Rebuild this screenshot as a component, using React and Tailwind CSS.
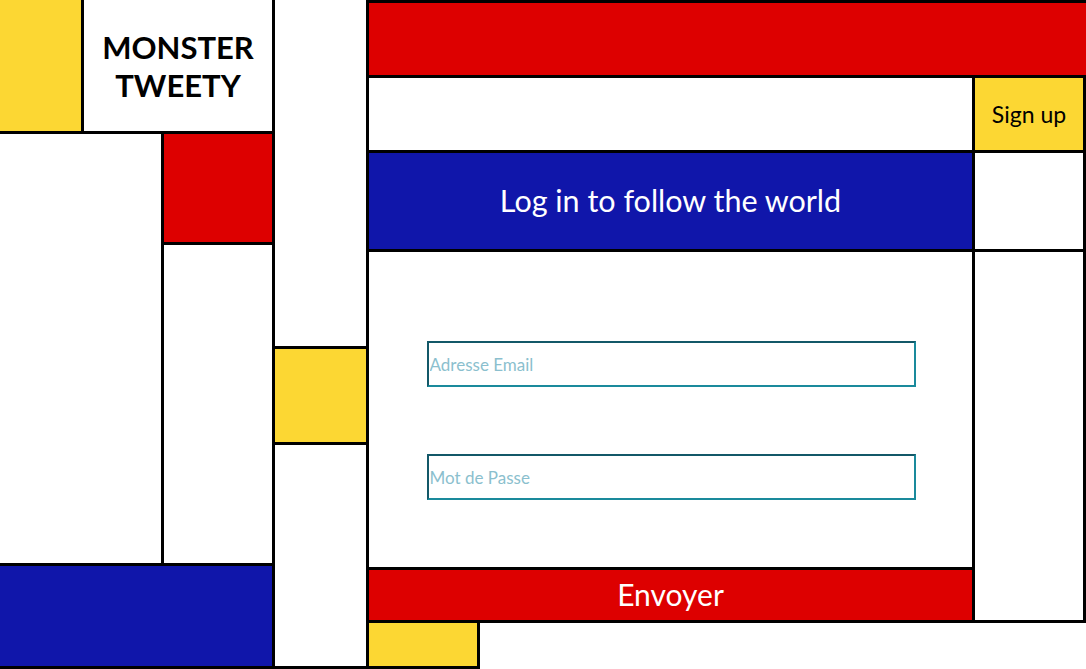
const font = { fontFamily: 'Lato, "Noto Sans", sans-serif' };

function LoginForm() {
  return (
    <form
      onSubmit={(e) => e.preventDefault()}
      className="flex flex-1 flex-col gap-[3px]"
    >
      <div className="flex flex-1 flex-col items-center gap-[67px] bg-white pl-px pt-[89px]">
        <input
          type="email"
          placeholder="Adresse Email"
          className="h-[46px] w-[489px] border-2 border-t-[#135868] border-l-[#135868] border-r-[#1a8a9c] border-b-[#1a8a9c] bg-white px-px text-[17px] text-[#2b5f6e] outline-none placeholder:text-[#8bbfce]"
        />
        <input
          type="password"
          placeholder="Mot de Passe"
          className="h-[46px] w-[489px] border-2 border-t-[#135868] border-l-[#135868] border-r-[#1a8a9c] border-b-[#1a8a9c] bg-white px-px text-[17px] text-[#2b5f6e] outline-none placeholder:text-[#8bbfce]"
        />
      </div>
      <button
        type="submit"
        className="flex h-[50px] items-center justify-center bg-[#dd0000] pb-[2px] text-[30px] leading-none text-white"
      >
        Envoyer
      </button>
    </form>
  );
}

export default function App() {
  return (
    <div style={font} className="flex h-[669px] w-[1086px] gap-[3px] overflow-hidden bg-black">
      {/* Left column */}
      <div className="flex w-[272px] flex-col gap-[3px] pb-[3px]">
        <div className="flex h-[131px] gap-[3px]">
          <div className="w-[81px] bg-[#fcd733]" />
          <div className="flex flex-1 items-center justify-center bg-white">
            <h1 className="text-center text-[31px] font-bold leading-[38px] text-black">
              MONSTER
              <br />
              TWEETY
            </h1>
          </div>
        </div>
        <div className="flex h-[429px] gap-[3px]">
          <div className="w-[161px] bg-white" />
          <div className="flex flex-1 flex-col gap-[3px]">
            <div className="h-[108px] bg-[#dd0000]" />
            <div className="flex-1 bg-white" />
          </div>
        </div>
        <div className="flex-1 bg-[#1016aa]" />
      </div>

      {/* Narrow column */}
      <div className="flex w-[91px] flex-col gap-[3px] pb-[3px]">
        <div className="h-[346px] bg-white" />
        <div className="h-[93px] bg-[#fcd733]" />
        <div className="flex-1 bg-white" />
      </div>

      {/* Main column */}
      <div className="flex flex-1 flex-col gap-[3px] pt-[3px]">
        <div className="h-[72px] bg-[#dd0000]" />
        <div className="flex h-[542px] gap-[3px] pr-[3px]">
          <div className="flex w-[603px] flex-col gap-[3px]">
            <div className="h-[72px] bg-white" />
            <div className="flex h-[96px] items-center justify-center bg-[#1016aa]">
              <h2 className="pb-[2px] text-[30.5px] leading-none text-white">Log in to follow the world</h2>
            </div>
            <LoginForm />
          </div>
          <div className="flex flex-1 flex-col gap-[3px]">
            <a href="#" className="flex h-[72px] items-center justify-center bg-[#fcd733] text-[23px] text-black">
              Sign up
            </a>
            <div className="h-[96px] bg-white" />
            <div className="flex-1 bg-white" />
          </div>
        </div>
        <div className="flex flex-1">
          <div className="w-[108px] pb-[3px]">
            <div className="h-full bg-[#fcd733]" />
          </div>
          <div className="ml-[3px] flex-1 bg-white" />
        </div>
      </div>
    </div>
  );
}
